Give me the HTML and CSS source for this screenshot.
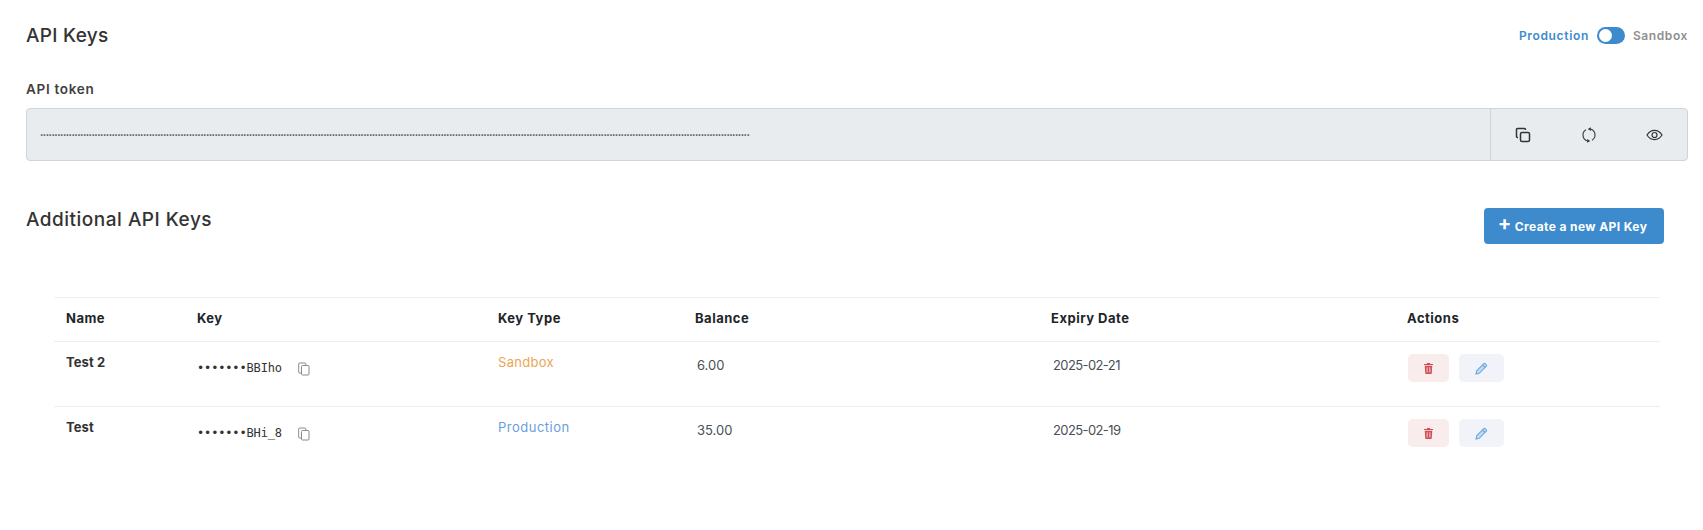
FILE: index.html
```html
<!DOCTYPE html>
<html lang="en">
<head>
<meta charset="utf-8">
<title>API Keys</title>
<link rel="stylesheet" href="styles.css">
</head>
<body>
<main class="page">
  <header class="top">
    <h1 class="title">API Keys</h1>
    <div class="env">
      <span class="env-on">Production</span>
      <span class="switch"><span class="knob"></span></span>
      <span class="env-off">Sandbox</span>
    </div>
  </header>
  <label class="label">API token</label>
  <div class="token">
    <div class="token-value">••••••••••••••••••••••••••••••••••••••••••••••••••••••••••••••••••••••••••••••••••••••••••••••••••••••••••••••••••••••••••••••••••••••••••••••••••••••••••••••••••••••••••••••••••••••••••••••••••••••••••••••••••••••••••••••••••••••••••••••••••••••••</div>
    <div class="token-actions">
      <button class="tbtn" aria-label="Copy"><svg width="16" height="16" viewBox="0 0 16 16" fill="none" stroke="#333" stroke-width="1.5"><rect x="5.500" y="5.500" width="9" height="9" rx="1.500"/><path d="M10.500 3V2.500a1 1 0 0 0-1-1H2.500a1 1 0 0 0-1 1v7a1 1 0 0 0 1 1H3"/></svg></button>
      <button class="tbtn" aria-label="Regenerate"><svg width="16" height="16" viewBox="0 0 16 16" fill="none" stroke="#444" stroke-width="1.200"><path d="M9.500 2.200A6 6 0 0 1 11 13.200"/><path d="M6.500 13.800A6 6 0 0 1 5 2.800"/><path d="M6.800 2 9.800 .3 9.800 3.900z" fill="#333" stroke="none"/><path d="M9.200 14 6.200 15.700 6.200 12.100z" fill="#333" stroke="none"/></svg></button>
      <button class="tbtn" aria-label="Show"><svg width="17" height="14" viewBox="0 0 17 14" fill="none" stroke="#333" stroke-width="1.200"><path d="M1 7c2-3.200 4.500-4.600 7.500-4.600S14 3.800 16 7c-2 3.200-4.500 4.600-7.500 4.600S3 10.200 1 7z"/><circle cx="8.500" cy="7" r="2.500"/></svg></button>
    </div>
  </div>
  <section class="additional">
    <h2 class="subtitle">Additional API Keys</h2>
    <button class="create"><span class="plus">+</span>Create a new API Key</button>
  </section>
  <table class="keys">
    <colgroup>
      <col class="c-name"><col class="c-key"><col class="c-type"><col class="c-bal"><col class="c-date"><col class="c-act">
    </colgroup>
    <thead>
      <tr><th>Name</th><th>Key</th><th>Key Type</th><th>Balance</th><th>Expiry Date</th><th>Actions</th></tr>
    </thead>
    <tbody>
      <tr>
        <td class="name">Test 2</td>
        <td><div class="key"><code>•••••••BBIho</code><svg class="copy" width="12" height="14" viewBox="0 0 12 14" fill="none" stroke="#8a8a8a" stroke-width="1"><rect x="3.500" y="3.500" width="7.500" height="9.500" rx="1"/><path d="M3 11H1.500a.8.8 0 0 1-.8-.8V1.800a.8.8 0 0 1 .8-.8H7a.8.8 0 0 1 .8.8V3"/></svg></div></td>
        <td class="sandbox">Sandbox</td>
        <td class="val">6.00</td>
        <td class="val date">2025-02-21</td>
        <td><div class="acts"><button class="del" aria-label="Delete"><svg width="9" height="11" viewBox="0 0 10 12" fill="#cf4f55"><path d="M3.500 0h3l.5 1h3v1.200H0V1h3zM.8 3h8.400l-.6 8.200a.8.8 0 0 1-.8.800H2.200a.8.8 0 0 1-.8-.8zM3 4.500v6h.9v-6zm3.100 0v6H7v-6z"/></svg></button><button class="edit" aria-label="Edit"><svg width="13" height="13" viewBox="0 0 13 13" fill="#c4dcf2" stroke="#6aa9e2" stroke-width="1.100"><path d="M1 12l.7-3.200L8.800 1.700a1 1 0 0 1 1.400 0l1.100 1.100a1 1 0 0 1 0 1.400L4.200 11.300z"/><path d="M7.500 3l2.500 2.500"/></svg></button></div></td>
      </tr>
      <tr>
        <td class="name">Test</td>
        <td><div class="key"><code>•••••••BHi_8</code><svg class="copy" width="12" height="14" viewBox="0 0 12 14" fill="none" stroke="#8a8a8a" stroke-width="1"><rect x="3.500" y="3.500" width="7.500" height="9.500" rx="1"/><path d="M3 11H1.500a.8.8 0 0 1-.8-.8V1.800a.8.8 0 0 1 .8-.8H7a.8.8 0 0 1 .8.8V3"/></svg></div></td>
        <td class="production">Production</td>
        <td class="val">35.00</td>
        <td class="val date">2025-02-19</td>
        <td><div class="acts"><button class="del" aria-label="Delete"><svg width="9" height="11" viewBox="0 0 10 12" fill="#cf4f55"><path d="M3.500 0h3l.5 1h3v1.200H0V1h3zM.8 3h8.400l-.6 8.200a.8.8 0 0 1-.8.800H2.200a.8.8 0 0 1-.8-.8zM3 4.500v6h.9v-6zm3.100 0v6H7v-6z"/></svg></button><button class="edit" aria-label="Edit"><svg width="13" height="13" viewBox="0 0 13 13" fill="#c4dcf2" stroke="#6aa9e2" stroke-width="1.100"><path d="M1 12l.7-3.200L8.800 1.700a1 1 0 0 1 1.400 0l1.100 1.100a1 1 0 0 1 0 1.400L4.200 11.300z"/><path d="M7.500 3l2.500 2.500"/></svg></button></div></td>
      </tr>
    </tbody>
  </table>
</main>
</body>
</html>
```

FILE: styles.css
```css
* { box-sizing: border-box; }
html, body { margin: 0; padding: 0; background: #fff; }
body { font-family: "Inter", "Open Sans", sans-serif; color: #333; height: 530px; overflow: hidden; }
button { font-family: inherit; border: 0; cursor: pointer; }
.page { padding: 24px 15px 0 26px; }

.top { display: flex; justify-content: space-between; align-items: center; height: 22px; margin-bottom: 35px; }
.title { margin: 0; font-size: 19px; font-weight: 500; color: #333; letter-spacing: .3px; }
.env { display: flex; align-items: center; font-size: 12px; font-weight: 600; }
.env-on { color: #3d8bcd; margin-right: 8px; letter-spacing: .65px; }
.env-off { color: #8f8f8f; margin-left: 8px; letter-spacing: .6px; }
.switch { width: 28px; height: 17px; border-radius: 9px; background: #3d8bcd; padding: 2px 0 0 2px; display: block; }
.knob { display: block; width: 13px; height: 13px; border-radius: 50%; background: #fff; }

.label { display: block; font-size: 13.500px; font-weight: 600; line-height: 16px; color: #3f3f3f; letter-spacing: .7px; margin-bottom: 11px; }
.token { display: flex; height: 53px; background: #e9ecef; border: 1px solid #ced4da; border-radius: 4px; }
.token-value { flex: 1; align-self: center; padding-left: 13px; font-size: 6px; letter-spacing: -.515px; line-height: 10px; color: #495057; overflow: hidden; white-space: nowrap; }
.token-actions { display: flex; width: 197px; border-left: 1px solid #ced4da; }
.tbtn { flex: 1; background: transparent; display: flex; align-items: center; justify-content: center; padding: 0; }
.tbtn + .tbtn { border-left: 1px solid #e8ebee; }

.additional { display: flex; justify-content: space-between; align-items: flex-start; padding-right: 24px; margin-top: 47px; }
.subtitle { margin: 0; font-size: 19px; font-weight: 500; line-height: 22px; margin-top: 1px; color: #333; letter-spacing: .5px; }
.create { width: 180px; height: 36px; background: #3d8bcd; color: #fff; font-size: 12px; font-weight: 700; border-radius: 4px; padding: 0 3px 2px 0; letter-spacing: .4px; }
.plus { font-size: 20px; line-height: 12px; margin-right: 3px; vertical-align: 1px; }

.keys { width: 1606px; margin: 53px 0 0 28px; border-collapse: collapse; table-layout: fixed; font-size: 13px; }
.c-name { width: 131px; } .c-key { width: 301px; } .c-type { width: 197px; }
.c-bal { width: 356px; } .c-date { width: 356px; } .c-act { width: 265px; }
.keys th { height: 44px; padding: 0 12px 4px; text-align: left; font-weight: 700; color: #212529; letter-spacing: .5px; border-top: 1px solid #f1f1f1; border-bottom: 1px solid #eee; }
.keys td { height: 65px; padding: 12px 12px 0; vertical-align: top; line-height: 16px; color: #495057; }
.keys tbody tr + tr td { border-top: 1px solid #eee; }
.keys td.name { font-weight: 700; color: #333; letter-spacing: .1px; }
.keys td.sandbox { color: #eba653; letter-spacing: .3px; }
.keys td.production { color: #6a9fd8; letter-spacing: .5px; }
.keys td.val { padding-left: 14px; padding-top: 15px; }
.keys td.date { letter-spacing: -.6px; }
.key { display: flex; align-items: center; padding-top: 6px; }
code { font-family: "DejaVu Sans Mono", monospace; font-size: 12px; letter-spacing: -.15px; color: #333; width: 101px; }
.copy { display: block; margin-top: 1px; }
.acts { display: flex; gap: 10px; margin: 0 0 0 1px; }
.del, .edit { height: 28px; border-radius: 5px; display: flex; align-items: center; justify-content: center; padding: 0; }
.del { width: 41px; background: #f8eced; }
.edit { width: 45px; background: #f1f3f8; }
```
